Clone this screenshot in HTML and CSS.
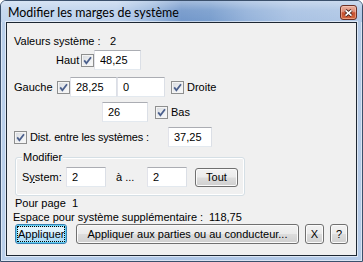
FILE: index.html
```html
<!DOCTYPE html>
<html lang="fr">
<head>
<meta charset="utf-8">
<title>Modifier les marges de système</title>
<link rel="stylesheet" href="styles.css">
</head>
<body>
<div class="window">
  <div class="titlebar">
    <span class="title">Modifier les marges de système</span>
    <span class="close">
      <svg width="9" height="8" viewBox="0 0 9 8">
        <path d="M1.5 1.3 L7.5 6.7 M7.5 1.3 L1.5 6.7" stroke="#3b1c16" stroke-width="3.2" fill="none"/>
        <path d="M1.5 1.3 L7.5 6.7 M7.5 1.3 L1.5 6.7" stroke="#ffffff" stroke-width="1.6" fill="none"/>
      </svg>
    </span>
  </div>
  <div class="client">
    <div class="row r1">
      <span class="lbl w-valeurs">Valeurs système :</span><span>2</span>
    </div>
    <div class="row r2">
      <span class="lbl w-haut">Haut</span>
      <span class="cb"><svg width="11" height="11" viewBox="0 0 11 11"><path d="M2.2 5.4 L4.4 8.2 L9 2.2" stroke="#4b5f8c" stroke-width="1.8" fill="none"/></svg></span>
      <input class="tb w47 ml7" type="text" value="48,25">
    </div>
    <div class="row r3">
      <span class="lbl w-gauche">Gauche</span>
      <span class="cb"><svg width="11" height="11" viewBox="0 0 11 11"><path d="M2.2 5.4 L4.4 8.2 L9 2.2" stroke="#4b5f8c" stroke-width="1.8" fill="none"/></svg></span>
      <input class="tb w47 ml4" type="text" value="28,25">
      <input class="tb w48 ml7" type="text" value="0">
      <span class="cb ml6"><svg width="11" height="11" viewBox="0 0 11 11"><path d="M2.2 5.4 L4.4 8.2 L9 2.2" stroke="#4b5f8c" stroke-width="1.8" fill="none"/></svg></span>
      <span class="lbl ml3">Droite</span>
    </div>
    <div class="row r4">
      <input class="tb w46" type="text" value="26">
      <span class="cb ml7"><svg width="11" height="11" viewBox="0 0 11 11"><path d="M2.2 5.4 L4.4 8.2 L9 2.2" stroke="#4b5f8c" stroke-width="1.8" fill="none"/></svg></span>
      <span class="lbl ml3">Bas</span>
    </div>
    <div class="row r5">
      <span class="cb"><svg width="11" height="11" viewBox="0 0 11 11"><path d="M2.2 5.4 L4.4 8.2 L9 2.2" stroke="#4b5f8c" stroke-width="1.8" fill="none"/></svg></span>
      <span class="lbl ml3 w-dist">Dist. entre les systèmes :</span>
      <input class="tb w44" type="text" value="37,25">
    </div>
    <div class="group">
      <div class="group-label">Modifier</div>
      <div class="row grow">
        <span class="lbl w-system">S<u>y</u>stem:</span>
        <input class="tb w40" type="text" value="2">
        <span class="lbl ml10 w-a">à ...</span>
        <input class="tb w40" type="text" value="2">
        <button class="btn w43 ml8 h19" type="button">Tout</button>
      </div>
    </div>
    <div class="row r-pour">
      <span class="lbl w-pour">Pour page</span><span>1</span>
    </div>
    <div class="row r-espace">
      <span class="lbl w-espace">Espace pour système supplémentaire :</span><span>118,75</span>
    </div>
    <div class="row r-btns">
      <button class="btn default w52" type="button"><span class="focus">Appliquer</span></button>
      <button class="btn w223 ml9" type="button">Appliquer aux parties ou au conducteur...</button>
      <button class="btn w19 ml6" type="button">X</button>
      <button class="btn w18 ml6" type="button">?</button>
    </div>
  </div>
</div>
</body>
</html>
```

FILE: styles.css
```css
* { box-sizing: border-box; }

html, body {
  margin: 0;
  padding: 0;
}

body {
  width: 363px;
  height: 262px;
  overflow: hidden;
  background: #ffffff;
  font-family: "Liberation Sans", Arial, sans-serif;
  font-size: 11px;
  color: #000000;
}

.window {
  width: 363px;
  height: 262px;
  display: flex;
  flex-direction: column;
  border: 1px solid #3b506c;
  border-radius: 6px 6px 0 0;
  background: linear-gradient(90deg, #b9cfea 0%, #adc5e5 50%, #b4cae7 100%);
  box-shadow: inset 0 0 0 1px rgba(255, 255, 255, 0.5);
}

.titlebar {
  height: 21px;
  flex-shrink: 0;
  display: flex;
  align-items: flex-start;
  padding: 0 5px 0 7px;
  border-radius: 5px 5px 0 0;
  background:
    linear-gradient(180deg, rgba(255,255,255,0.35) 0%, rgba(255,255,255,0.08) 45%, rgba(255,255,255,0) 100%),
    linear-gradient(90deg, #c3d6ee 0%, #bcd1ec 32%, #9ab7dd 42%, #7297ca 50%, #789dcd 58%, #94b2da 68%, #a9c2e3 80%, #b1c8e6 100%);
}

.title {
  flex: 1;
  font-family: Lato, "Open Sans", sans-serif;
  font-size: 12.4px;
  line-height: 15px;
  margin-top: 4px;
  color: #000000;
  white-space: nowrap;
}

.close {
  width: 17px;
  height: 15px;
  margin-top: 4px;
  display: flex;
  align-items: center;
  justify-content: center;
  border: 1px solid #6b3026;
  border-radius: 3px;
  background: linear-gradient(180deg, #ebb1a2 0%, #de8c75 45%, #c8502f 52%, #d2673f 100%);
  box-shadow: inset 0 0 0 1px rgba(255, 220, 200, 0.45);
}

.close svg { display: block; }

.client {
  flex: 1;
  margin: 0 5px 5px 5px;
  border: 1px solid #1d2733;
  background: #f0f0f0;
  box-shadow: 0 0 0 1px rgba(255, 255, 255, 0.55);
  display: flex;
  flex-direction: column;
}

.row {
  display: flex;
  align-items: center;
  white-space: nowrap;
  flex-shrink: 0;
}

.lbl {
  flex-shrink: 0;
  white-space: nowrap;
}

.r1 { margin-top: 9px; height: 18px; padding-left: 7px; }
.r2 { height: 20px; padding-left: 49px; }
.r3 { margin-top: 7px; height: 20px; padding-left: 7px; }
.r4 { margin-top: 5px; height: 20px; padding-left: 95px; }
.r5 { margin-top: 5px; height: 20px; padding-left: 7px; }

.w-valeurs { width: 96px; }
.w-haut { width: 25px; }
.w-gauche { width: 43px; }
.w-dist { width: 138px; letter-spacing: -0.15px; }
.w-system { width: 44px; }
.w-a { width: 31px; }
.w-pour { width: 57px; }
.w-espace { width: 196px; }

.ml3 { margin-left: 3px; }
.ml4 { margin-left: 4px; }
.ml6 { margin-left: 6px; }
.ml7 { margin-left: 7px; }
.ml8 { margin-left: 8px; }
.ml9 { margin-left: 9px; }
.ml10 { margin-left: 10px; }

.cb {
  width: 13px;
  height: 13px;
  flex-shrink: 0;
  border: 1px solid #8e8f8f;
  background: linear-gradient(135deg, #d6d9de 0%, #eceef0 55%, #fafafa 100%);
  box-shadow: inset 0 0 0 1px #f4f4f4;
}

.cb svg { display: block; }

.tb {
  height: 20px;
  margin: 0;
  padding: 0 0 0 5px;
  flex-shrink: 0;
  border: 1px solid;
  border-color: #abadb3 #dbdfe6 #e3e9ef #e2e3ea;
  background: #ffffff;
  font-family: "Liberation Sans", Arial, sans-serif;
  font-size: 11px;
  color: #000000;
  outline: none;
}

.w40 { width: 40px; }
.w44 { width: 44px; }
.w46 { width: 46px; }
.w47 { width: 47px; }
.w48 { width: 48px; }

.group {
  margin: 10px 0 0 8px;
  width: 230px;
  border: 1px solid #d5dfe5;
  border-radius: 3px;
  padding: 0 0 8px 0;
  box-shadow: inset 0 0 0 1px #ffffff;
  flex-shrink: 0;
}

.group-label {
  margin: -7px 0 0 6px;
  padding: 0 1px;
  width: fit-content;
  line-height: 13px;
  height: 13px;
  background: #f0f0f0;
}

.grow { margin-top: 3px; height: 20px; padding-left: 6px; }

.r-pour { height: 13px; padding-left: 8px; }
.r-espace { margin-top: 1px; height: 13px; padding-left: 6px; }
.r-btns { margin-top: 1px; height: 20px; padding-left: 8px; }

.btn {
  height: 20px;
  margin-top: 0;
  margin-bottom: 0;
  padding: 0;
  flex-shrink: 0;
  border: 1px solid #707070;
  border-radius: 3px;
  background: linear-gradient(180deg, #f2f2f2 0%, #ebebeb 48%, #dddddd 52%, #cfcfcf 100%);
  box-shadow: inset 0 0 0 1px #fbfbfb;
  font-family: "Liberation Sans", Arial, sans-serif;
  font-size: 11px;
  color: #000000;
  text-align: center;
  white-space: nowrap;
}

.h19 { height: 19px; }
.w18 { width: 18px; }
.w19 { width: 19px; }
.w43 { width: 43px; }
.w52 { width: 52px; }
.w223 { width: 223px; }

.btn.default {
  display: flex;
  align-items: stretch;
  border-color: #3c7fb1;
  background: linear-gradient(180deg, #eaf6fd 0%, #d9f0fc 48%, #bee6fd 52%, #a7d9f5 100%);
  box-shadow: inset 0 0 0 1px #5fd0f5, inset 0 0 0 2px #b4e8fa;
}

.focus {
  flex: 1;
  margin: 1px;
  border: 1px dotted #000000;
  display: flex;
  align-items: center;
  justify-content: center;
}
```
